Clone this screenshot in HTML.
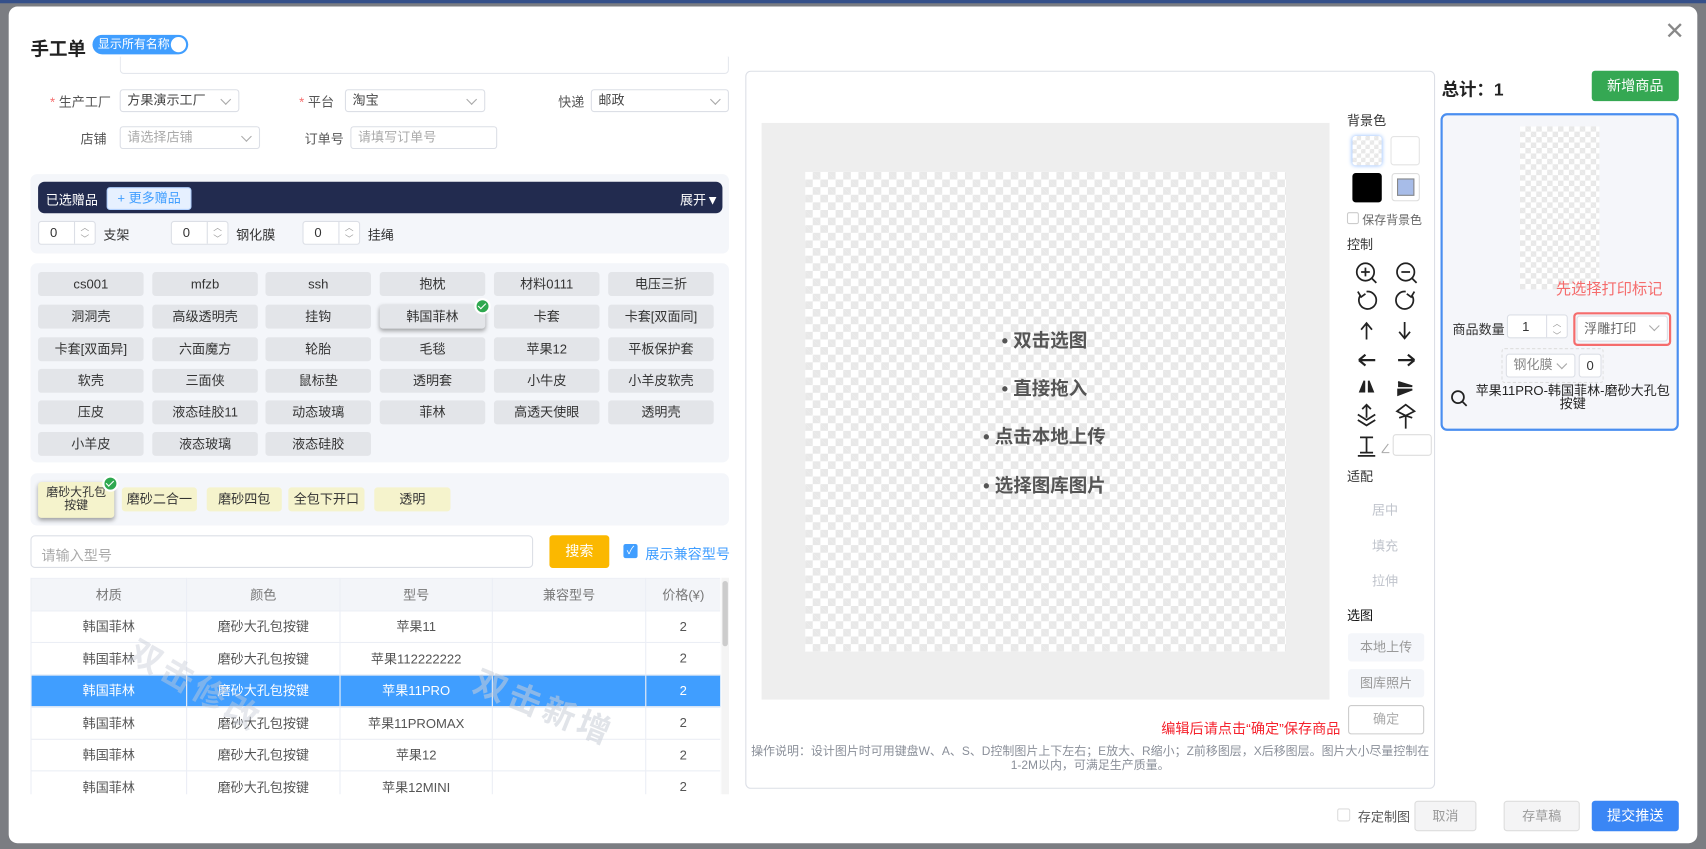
<!DOCTYPE html>
<html><head><meta charset="utf-8"><style>
*{box-sizing:border-box;margin:0;padding:0}
html,body{width:1706px;height:849px;overflow:hidden;background:#7b7d82}
body{font-family:"Liberation Sans","Noto Sans CJK SC",sans-serif;color:#333}
#w{position:absolute;left:0;top:0;width:1568px;height:780px;transform:scale(1.08801);transform-origin:0 0}
.a{position:absolute}
.modal{left:8px;top:6px;width:1552px;height:769px;background:#fff;border-radius:8px}
.sel{position:absolute;border:1px solid #dcdfe6;border-radius:3px;background:#fff;font-size:12px;color:#444;padding:3px 6px;height:21px;line-height:13px}
.sel:after{content:"";position:absolute;right:8px;top:5px;width:6px;height:6px;border-right:1px solid #aaa;border-bottom:1px solid #aaa;transform:rotate(45deg)}
.lbl{position:absolute;font-size:12px;color:#555;text-align:right}
.star{color:#f56c6c}
.mb{position:absolute;width:97px;height:22px;background:#e3e5e9;border-radius:3px;font-size:12px;color:#333;text-align:center;line-height:22px}
.cb{position:absolute;height:22px;background:#f5f3cc;border-radius:3px;font-size:12px;color:#333;text-align:center;line-height:22px}
.chk{position:absolute;width:15px;height:15px;border-radius:50%;background:#2ea84f;border:2px solid #fff}
.chk:after{content:"";position:absolute;left:3px;top:1px;width:3px;height:6px;border-right:1.5px solid #fff;border-bottom:1.5px solid #fff;transform:rotate(45deg)}
.num{position:absolute;width:53px;height:22px;border:1px solid #dcdfe6;border-radius:3px;background:#fff;font-size:12px;padding-left:10px;line-height:20px}
.num:after{content:"";position:absolute;left:32px;top:0;bottom:0;border-left:1px solid #dcdfe6}
.num i{position:absolute;left:38px;font-style:normal;font-size:8px;color:#999;line-height:9px}
table{border-collapse:collapse;font-size:12px;table-layout:fixed}
td,th{border:1px solid #ebeef5;text-align:center;height:29.5px;color:#555;font-weight:normal}
th{background:#f3f5f9;color:#777}
tr.s td{background:#409eff;color:#fff}
.ctl{font-size:12px;color:#333}
.g{font-size:12px;color:#c0c4cc;text-align:center;width:70px}
.bt{position:absolute;border-radius:3px;font-size:12px;text-align:center}
.bul{position:absolute;left:850px;width:220px;text-align:center;font-size:17px;font-weight:bold;color:#555}
.chkr{background-color:#fff;background-image:linear-gradient(45deg,#e8e8e8 25%,transparent 25%,transparent 75%,#e8e8e8 75%),linear-gradient(45deg,#e8e8e8 25%,transparent 25%,transparent 75%,#e8e8e8 75%);background-size:14px 14px;background-position:0 0,7px 7px}
</style></head><body><div id="w">
<div class="a" style="left:0;top:0;width:1568px;height:3px;background:#35508a"></div>
<div class="a modal"></div>
<div class="a" style="left:28px;top:31px;font-size:17px;font-weight:bold;color:#222">手工单</div>
<div class="a" style="left:85px;top:32px;width:88px;height:18px;border-radius:9px;background:#409eff;color:#fff;font-size:11px;line-height:18px;padding-left:5px">显示所有名称<span class="a" style="right:2px;top:2px;width:14px;height:14px;border-radius:50%;background:#fff"></span></div>
<div class="a" style="left:1530px;top:18px;font-size:22px;color:#888;line-height:22px">✕</div>
<div class="a" style="left:110px;top:52px;width:560px;height:16px;border:1px solid #e4e7ed;border-top:none;border-radius:0 0 4px 4px"></div>

<div class="lbl" style="left:40px;top:85px;width:62px"><span class="star">* </span>生产工厂</div>
<div class="sel" style="left:110px;top:82px;width:110px">方果演示工厂</div>
<div class="lbl" style="left:260px;top:85px;width:47px"><span class="star">* </span>平台</div>
<div class="sel" style="left:317px;top:82px;width:129px">淘宝</div>
<div class="lbl" style="left:490px;top:85px;width:47px">快递</div>
<div class="sel" style="left:543px;top:82px;width:127px">邮政</div>
<div class="lbl" style="left:50px;top:119px;width:48px">店铺</div>
<div class="sel" style="left:110px;top:116px;width:129px;color:#aaa">请选择店铺</div>
<div class="lbl" style="left:260px;top:119px;width:56px">订单号</div>
<div class="sel" style="left:322px;top:116px;width:135px;color:#aaa">请填写订单号</div>
<style>.sel[style*="322px"]:after{display:none}</style>

<div class="a" style="left:28px;top:160px;width:642px;height:73px;background:#f4f6fa;border-radius:6px"></div>
<div class="a" style="left:35px;top:167px;width:629px;height:29px;background:#222b4f;border-radius:6px"></div>
<div class="a" style="left:42px;top:175px;font-size:12px;color:#fff">已选赠品</div>
<div class="a" style="left:98px;top:172px;width:78px;height:21px;background:#e6f0ff;border:1px solid #b3d2ff;border-radius:3px;font-size:12px;color:#409eff;text-align:center;line-height:19px">+ 更多赠品</div>
<div class="a" style="left:625px;top:175px;font-size:12px;color:#fff">展开▼</div>
<div class="num" style="left:35px;top:203px">0<i style="top:1px">︿</i><i style="top:11px">﹀</i></div><div class="a ctl" style="left:95px;top:207px">支架</div>
<div class="num" style="left:157px;top:203px">0<i style="top:1px">︿</i><i style="top:11px">﹀</i></div><div class="a ctl" style="left:217px;top:207px">钢化膜</div>
<div class="num" style="left:278px;top:203px">0<i style="top:1px">︿</i><i style="top:11px">﹀</i></div><div class="a ctl" style="left:338px;top:207px">挂绳</div>

<div class="a" style="left:28px;top:242px;width:642px;height:183px;background:#f4f6fa;border-radius:6px"></div>
<div class="mb" style="left:35px;top:250px">cs001</div><div class="mb" style="left:140px;top:250px">mfzb</div><div class="mb" style="left:244px;top:250px">ssh</div><div class="mb" style="left:349px;top:250px">抱枕</div><div class="mb" style="left:454px;top:250px">材料0111</div><div class="mb" style="left:559px;top:250px">电压三折</div>
<div class="mb" style="left:35px;top:280px">洞洞壳</div><div class="mb" style="left:140px;top:280px">高级透明壳</div><div class="mb" style="left:244px;top:280px">挂钩</div><div class="mb" style="left:349px;top:280px;box-shadow:0 2px 4px rgba(0,0,0,.35)">韩国菲林</div><div class="mb" style="left:454px;top:280px">卡套</div><div class="mb" style="left:559px;top:280px">卡套[双面同]</div>
<div class="chk" style="left:436px;top:274px"></div>
<div class="mb" style="left:35px;top:310px">卡套[双面异]</div><div class="mb" style="left:140px;top:310px">六面魔方</div><div class="mb" style="left:244px;top:310px">轮胎</div><div class="mb" style="left:349px;top:310px">毛毯</div><div class="mb" style="left:454px;top:310px">苹果12</div><div class="mb" style="left:559px;top:310px">平板保护套</div>
<div class="mb" style="left:35px;top:339px">软壳</div><div class="mb" style="left:140px;top:339px">三面侠</div><div class="mb" style="left:244px;top:339px">鼠标垫</div><div class="mb" style="left:349px;top:339px">透明套</div><div class="mb" style="left:454px;top:339px">小牛皮</div><div class="mb" style="left:559px;top:339px">小羊皮软壳</div>
<div class="mb" style="left:35px;top:368px">压皮</div><div class="mb" style="left:140px;top:368px">液态硅胶11</div><div class="mb" style="left:244px;top:368px">动态玻璃</div><div class="mb" style="left:349px;top:368px">菲林</div><div class="mb" style="left:454px;top:368px">高透天使眼</div><div class="mb" style="left:559px;top:368px">透明壳</div>
<div class="mb" style="left:35px;top:397px">小羊皮</div><div class="mb" style="left:140px;top:397px">液态玻璃</div><div class="mb" style="left:244px;top:397px">液态硅胶</div>

<div class="a" style="left:28px;top:435px;width:642px;height:48px;background:#f4f6fa;border-radius:6px"></div>
<div class="cb" style="left:35px;top:443px;width:70px;height:33px;line-height:12px;padding-top:4px;font-size:11px;box-shadow:0 2px 4px rgba(0,0,0,.35)">磨砂大孔包<br>按键</div>
<div class="chk" style="left:94px;top:437px"></div>
<div class="cb" style="left:112px;top:448px;width:69px">磨砂二合一</div>
<div class="cb" style="left:190px;top:448px;width:69px">磨砂四包</div>
<div class="cb" style="left:265px;top:448px;width:70px">全包下开口</div>
<div class="cb" style="left:344px;top:448px;width:70px">透明</div>

<div class="a" style="left:28px;top:492px;width:462px;height:30px;border:1px solid #dcdfe6;border-radius:4px;font-size:13px;color:#aaa;padding:7px 9px">请输入型号</div>
<div class="bt" style="left:505px;top:492px;width:55px;height:30px;background:#fbb800;color:#fff;font-size:13px;line-height:30px">搜索</div>
<div class="a" style="left:573px;top:500px;width:13px;height:13px;background:#409eff;border-radius:2px;color:#fff;font-size:10px;line-height:13px;text-align:center">✓</div>
<div class="a" style="left:593px;top:499px;font-size:13px;color:#409eff">展示兼容型号</div>

<div class="a" style="left:28px;top:531px;width:634px;height:199px;overflow:hidden">
<table style="width:634px"><colgroup><col style="width:143px"><col style="width:141px"><col style="width:140px"><col style="width:141px"><col style="width:69px"></colgroup>
<tr><th>材质</th><th>颜色</th><th>型号</th><th>兼容型号</th><th>价格(¥)</th></tr>
<tr><td>韩国菲林</td><td>磨砂大孔包按键</td><td>苹果11</td><td></td><td>2</td></tr>
<tr><td>韩国菲林</td><td>磨砂大孔包按键</td><td>苹果112222222</td><td></td><td>2</td></tr>
<tr class="s"><td>韩国菲林</td><td>磨砂大孔包按键</td><td>苹果11PRO</td><td></td><td>2</td></tr>
<tr><td>韩国菲林</td><td>磨砂大孔包按键</td><td>苹果11PROMAX</td><td></td><td>2</td></tr>
<tr><td>韩国菲林</td><td>磨砂大孔包按键</td><td>苹果12</td><td></td><td>2</td></tr>
<tr><td>韩国菲林</td><td>磨砂大孔包按键</td><td>苹果12MINI</td><td></td><td>2</td></tr>
</table>
<div class="a" style="left:405px;top:95px;font-size:30px;font-weight:bold;color:rgba(200,205,215,.55);transform:rotate(22deg);letter-spacing:4px">双击新增</div>
<div class="a" style="left:85px;top:75px;font-size:30px;font-weight:bold;color:rgba(200,205,215,.45);transform:rotate(30deg);letter-spacing:4px">双击修改</div>
</div>
<div class="a" style="left:663px;top:531px;width:7px;height:199px;background:#f4f4f4"><div class="a" style="left:1px;top:3px;width:5px;height:60px;background:#ccc;border-radius:3px"></div></div>

<div class="a" style="left:685px;top:65px;width:634px;height:660px;border:1px solid #dcdfe6;border-radius:5px"></div>
<div class="a" style="left:700px;top:113px;width:522px;height:530px;background:#eeeeee"></div>
<div class="a chkr" style="left:740px;top:158px;width:442px;height:441px"></div>
<div class="bul" style="top:299px">• 双击选图</div>
<div class="bul" style="top:343px">• 直接拖入</div>
<div class="bul" style="top:387px">• 点击本地上传</div>
<div class="bul" style="top:432px">• 选择图库图片</div>

<div class="a ctl" style="left:1238px;top:102px">背景色</div>
<div class="a chkr" style="left:1243px;top:125px;width:27px;height:27px;border-radius:3px;box-shadow:0 0 4px #8ab8ff;background-size:8px 8px;background-position:0 0,4px 4px"></div>
<div class="a" style="left:1278px;top:125px;width:27px;height:27px;border-radius:3px;border:1px solid #e4e4e4"></div>
<div class="a" style="left:1243px;top:159px;width:27px;height:27px;border-radius:3px;background:#000"></div>
<div class="a" style="left:1279px;top:159px;width:26px;height:26px;border-radius:3px;border:1px solid #ddd;padding:4px"><div style="width:16px;height:16px;background:#a7bce8;border:1px solid #888"></div></div>
<div class="a" style="left:1238px;top:195px;width:11px;height:11px;border:1px solid #ccc;border-radius:2px"></div>
<div class="a" style="left:1252px;top:194px;font-size:11px;color:#666">保存背景色</div>
<div class="a ctl" style="left:1238px;top:216px">控制</div>
<svg class="a" style="left:1240px;top:238px" width="70" height="185" viewBox="0 0 70 185" fill="none" stroke="#222" stroke-width="1.6">
<circle cx="15" cy="12" r="8"/><path d="M15 8v8M11 12h8M21 18l4 4"/>
<circle cx="52" cy="12" r="8"/><path d="M48 12h8M58 18l4 4"/>
<path d="M10 34a8 8 0 1 0 6 -4"/><path d="M8 30l3 5 4-3"/>
<path d="M58 34a8 8 0 1 1 -6 -4"/><path d="M60 30l-3 5-4-3"/>
<path d="M16 74V60M11 65l5-6 5 6" /><path d="M51 58v14M46 67l5 6 5-6"/>
<path d="M9 93h15M9 93l6-5M9 93l6 5" stroke-width="2"/><path d="M45 93h15M60 93l-6-5M60 93l-6 5" stroke-width="2"/>
<path d="M14 112l-4 10h4zM18 112v10h4z" fill="#222"/>
<path d="M45 113l13 4-13 0M45 120h13l-13 5z" fill="#222"/>
<path d="M16 134v12M12 138l4-4 4 4M8 143l8 5 8-5M8 148l8 5 8-5"/>
<path d="M44 140l8-6 8 6-8 4zM52 144v12M46 146l6-2 6 2"/>
<path d="M10 164h12M16 164v14M10 178h12M8 181h16"/>
<path d="M30 178l6-8M30 178h7" stroke="#aaa" stroke-width="1"/>
</svg>
<div class="a" style="left:1280px;top:399px;width:36px;height:20px;border:1px solid #ddd;border-radius:3px"></div>
<div class="a ctl" style="left:1238px;top:429px">适配</div>
<div class="a g" style="left:1238px;top:460px">居中</div>
<div class="a g" style="left:1238px;top:493px">填充</div>
<div class="a g" style="left:1238px;top:525px">拉伸</div>
<div class="a ctl" style="left:1238px;top:557px;color:#111">选图</div>
<div class="bt" style="left:1239px;top:582px;width:70px;height:26px;background:#f4f6fa;color:#999;line-height:26px">本地上传</div>
<div class="bt" style="left:1239px;top:615px;width:70px;height:26px;background:#f4f6fa;color:#999;line-height:26px">图库照片</div>
<div class="bt" style="left:1239px;top:648px;width:70px;height:27px;border:1px solid #ccc;color:#aaa;line-height:25px">确定</div>
<div class="a" style="left:1000px;top:659px;width:232px;text-align:right;font-size:13px;color:#f5222d">编辑后请点击“确定”保存商品</div>
<div class="a" style="left:688px;top:685px;width:628px;text-align:center;font-size:11px;color:#8a8f99;line-height:13px">操作说明：设计图片时可用键盘W、A、S、D控制图片上下左右；E放大、R缩小；Z前移图层，X后移图层。图片大小尽量控制在1-2M以内，可满足生产质量。</div>

<div class="a" style="left:1325px;top:69px;font-size:16px;font-weight:bold;color:#222">总计：1</div>
<div class="bt" style="left:1463px;top:65px;width:80px;height:28px;background:#35a853;color:#fff;line-height:28px;font-size:13px">新增商品</div>
<div class="a" style="left:1324px;top:104px;width:219px;height:292px;border:2px solid #4a8ef0;border-radius:6px;background:#f5f6fa"></div>
<div class="a chkr" style="left:1397px;top:116px;width:73px;height:150px;background-size:10px 10px;background-position:0 0,5px 5px"></div>
<div class="a" style="left:1430px;top:255px;font-size:14px;color:#f56c6c">先选择打印标记</div>
<div class="a ctl" style="left:1335px;top:294px">商品数量</div>
<div class="a" style="left:1385px;top:289px;width:56px;height:22px;border:1px solid #dcdfe6;border-radius:3px;background:#fff;font-size:12px;padding-left:13px;line-height:20px">1<span class="a" style="left:35px;top:0;bottom:0;border-left:1px solid #dcdfe6"></span><span class="a" style="left:41px;top:-2px;font-size:8px;color:#999">︿</span><span class="a" style="left:41px;top:9px;font-size:8px;color:#999">﹀</span></div>
<div class="a" style="left:1446px;top:287px;width:90px;height:31px;border:2px solid #f56c6c;border-radius:4px"></div>
<div class="sel" style="left:1449px;top:290px;width:84px;height:24px;padding-top:5px;color:#666">浮雕打印</div>
<div class="a" style="left:1380px;top:320px;width:94px;height:32px;border:1px dashed #ddd;border-radius:3px"></div>
<div class="sel" style="left:1384px;top:325px;width:64px;height:22px;color:#888">钢化膜</div>
<div class="a" style="left:1451px;top:325px;width:21px;height:22px;border:1px solid #dcdfe6;border-radius:3px;background:#fff;font-size:12px;text-align:center;line-height:20px">0</div>
<svg class="a" style="left:1333px;top:358px" width="16" height="16" fill="none" stroke="#222" stroke-width="1.6"><circle cx="7" cy="7" r="5.5"/><path d="M11 11l4 4"/></svg>
<div class="a" style="left:1353px;top:353px;width:185px;text-align:center;font-size:12px;color:#222;line-height:12px">苹果11PRO-韩国菲林-磨砂大孔包按键</div>

<div class="a" style="left:1229px;top:743px;width:12px;height:12px;border:1px solid #ddd;border-radius:2px"></div>
<div class="a ctl" style="left:1248px;top:742px;color:#555">存定制图</div>
<div class="bt" style="left:1300px;top:736px;width:57px;height:28px;border:1px solid #ddd;background:#f4f4f5;color:#999;line-height:26px">取消</div>
<div class="bt" style="left:1382px;top:736px;width:70px;height:28px;border:1px solid #ddd;background:#f4f4f5;color:#999;line-height:26px">存草稿</div>
<div class="bt" style="left:1463px;top:736px;width:80px;height:28px;background:#3a86f5;color:#fff;line-height:28px;font-size:13px">提交推送</div>
</div></body></html>
